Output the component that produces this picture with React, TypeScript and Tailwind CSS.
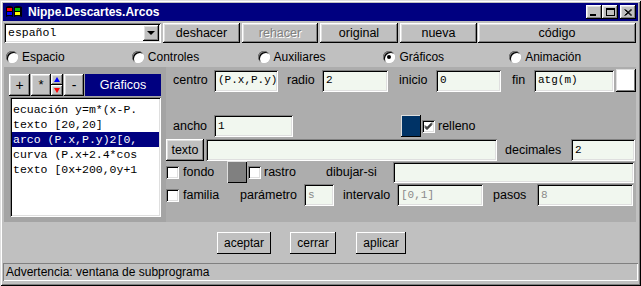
import React from "react";

const SANS = '"Liberation Sans", Arial, sans-serif';
const MONO = '"Liberation Mono", "Courier New", monospace';

const raised =
  "bg-[#c0c0c0] shadow-[inset_-1px_-1px_0_#000,inset_1px_1px_0_#fff,inset_-2px_-2px_0_#808080,inset_2px_2px_0_#dfdfdf]";
const raisedThin = "bg-[#c0c0c0] shadow-[inset_-1px_-1px_0_#000,inset_1px_1px_0_#fff]";
const field =
  "bg-[#f1f7ef] shadow-[inset_1px_1px_0_#808080,inset_-1px_-1px_0_#fff,inset_2px_2px_0_#000,inset_-2px_-2px_0_#dfdfdf]";
const whiteSunken =
  "bg-white shadow-[inset_1px_1px_0_#808080,inset_-1px_-1px_0_#fff,inset_2px_2px_0_#000,inset_-2px_-2px_0_#dfdfdf]";

function Field({ w, text, dim, h = "h-[22px]" }: { w: string; text?: string; dim?: boolean; h?: string }) {
  return (
    <div
      className={`${field} ${w} ${h} shrink-0 flex items-center pl-[4px] text-[11px] ${dim ? "text-[#8a8a8a]" : "text-black"}`}
      style={{ fontFamily: MONO }}
    >
      {text}
    </div>
  );
}

function Label({ w, pl, children }: { w: string; pl: string; children: React.ReactNode }) {
  return <div className={`${w} ${pl} shrink-0 text-[12.5px] text-black whitespace-nowrap`}>{children}</div>;
}

function Check({ checked }: { checked?: boolean }) {
  return (
    <div className={`${whiteSunken} w-[13px] h-[13px] shrink-0 relative`}>
      {checked && (
        <svg className="absolute left-0 top-0" width="13" height="13" viewBox="0 0 13 13">
          <path d="M3 5.5 L5 7.5 L10 2.5 M3 6.5 L5 8.5 L10 3.5 M3 7.5 L5 9.5 L10 4.5" stroke="#000" strokeWidth="1" fill="none" />
        </svg>
      )}
    </div>
  );
}

function Radio({ checked, label }: { checked?: boolean; label: string }) {
  return (
    <div className="flex items-center pl-[2px]">
      <div className="w-[12px] h-[12px] rounded-full bg-white shadow-[inset_1px_1px_0_#808080,inset_-1px_-1px_0_#fff,inset_2px_2px_0_#000] flex items-center justify-center shrink-0">
        {checked && <div className="w-[4px] h-[4px] rounded-full bg-black" />}
      </div>
      <span className="ml-[4px] text-[12px] text-black">{label}</span>
    </div>
  );
}

function Btn({ w, children, disabled }: { w: string; children: React.ReactNode; disabled?: boolean }) {
  return (
    <div
      className={`${raised} ${w} h-[20px] shrink-0 flex items-center justify-center text-[12.5px] ${
        disabled ? "text-[#808080] [text-shadow:1px_1px_0_#fff]" : "text-black"
      }`}
    >
      {children}
    </div>
  );
}

function WinIcon() {
  return (
    <svg width="18" height="14" viewBox="0 0 18 14">
      <path d="M1 2 Q4 0 8 2 L8 12 Q4 10 1 12 Z" fill="#000" />
      <path d="M9 2 Q13 0 17 2 L17 12 Q13 10 9 12 Z" fill="#000" />
      <rect x="2" y="3" width="5" height="3" fill="#ff0000" />
      <rect x="10" y="3" width="5" height="3" fill="#00c000" />
      <rect x="2" y="7" width="5" height="3" fill="#0000ff" />
      <rect x="10" y="7" width="5" height="3" fill="#ffff00" />
    </svg>
  );
}

function CtlBtn({ children, ml }: { children: React.ReactNode; ml?: string }) {
  return (
    <div className={`${raised} w-[16px] h-[14px] flex items-center justify-center ${ml ?? ""}`}>{children}</div>
  );
}

export default function App() {
  const items = [
    "ecuación y=m*(x-P.",
    "texto [20,20]",
    "arco (P.x,P.y)2[0,",
    "curva (P.x+2.4*cos",
    "texto [0x+200,0y+1",
  ];
  return (
    <div
      className="w-[641px] h-[286px] bg-[#c0c0c0] p-[3px] flex flex-col shadow-[inset_1px_1px_0_#dfdfdf,inset_-1px_-1px_0_#000,inset_2px_2px_0_#fff,inset_-2px_-2px_0_#808080] overflow-hidden"
      style={{ fontFamily: SANS }}
    >
      {/* title bar */}
      <div className="h-[18px] bg-[#000080] flex items-center pl-[2px] pr-[2px] shrink-0">
        <WinIcon />
        <span className="ml-[5px] text-white font-bold text-[12px]">Nippe.Descartes.Arcos</span>
        <div className="ml-auto flex items-center">
          <CtlBtn>
            <div className="w-[6px] h-[2px] bg-black mt-[6px] mr-[2px]" />
          </CtlBtn>
          <CtlBtn>
            <div className="w-[9px] h-[8px] border border-black border-t-2" />
          </CtlBtn>
          <CtlBtn ml="ml-[2px]">
            <svg width="8" height="7" viewBox="0 0 8 7">
              <path d="M0.5 0.5 L7 6.5 M1.5 0.5 L8 6.5 M7 0.5 L0.5 6.5 M8 0.5 L1.5 6.5" stroke="#000" strokeWidth="1" />
            </svg>
          </CtlBtn>
        </div>
      </div>

      {/* top toolbar */}
      <div className="mt-[2px] h-[20px] flex pl-[1px] shrink-0">
        <div className={`${whiteSunken} w-[157px] h-[20px] flex items-center relative shrink-0`}>
          <span className="pl-[4px] text-[11.5px] text-black" style={{ fontFamily: MONO }}>
            español
          </span>
          <div className={`${raised} absolute right-[2px] top-[2px] w-[16px] h-[16px] flex items-center justify-center`}>
            <div className="w-0 h-0 border-l-[4px] border-r-[4px] border-t-[4px] border-l-transparent border-r-transparent border-t-black" />
          </div>
        </div>
        <div className="ml-[2px] flex gap-[2px]">
          <Btn w="w-[77px]">deshacer</Btn>
          <Btn w="w-[76px]" disabled>
            rehacer
          </Btn>
          <Btn w="w-[78px]">original</Btn>
          <Btn w="w-[77px]">nueva</Btn>
        </div>
        <div className="ml-[1px]">
          <Btn w="w-[158px]">código</Btn>
        </div>
      </div>

      {/* radios */}
      <div className="h-[24px] grid grid-cols-5 w-[629px] ml-[1px] items-center pt-[3px] shrink-0">
        <Radio label="Espacio" />
        <Radio label="Controles" />
        <Radio label="Auxiliares" />
        <Radio checked label="Gráficos" />
        <Radio label="Animación" />
      </div>

      {/* main area */}
      <div className="h-[155px] w-[632px] ml-[1px] flex shrink-0">
        {/* left panel */}
        <div className="w-[162px] bg-[#a4a4a4] pt-[7px] shrink-0">
          <div className="flex h-[22px] pl-[5px]">
            <div className={`${raised} w-[21px] h-[22px] flex items-center justify-center text-[14px] text-black`}>+</div>
            <div className={`${raised} ml-[1px] w-[20px] h-[22px] flex items-center justify-center text-[13px] text-black`}>*</div>
            <div className="w-[12px] h-[22px] flex flex-col">
              <div className={`${raised} h-[11px] flex items-center justify-center`}>
                <div className="w-0 h-0 border-l-[3px] border-r-[3px] border-b-[5px] border-l-transparent border-r-transparent border-b-[#0000ff]" />
              </div>
              <div className={`${raised} h-[11px] flex items-center justify-center`}>
                <div className="w-0 h-0 border-l-[3px] border-r-[3px] border-t-[5px] border-l-transparent border-r-transparent border-t-[#ff0000]" />
              </div>
            </div>
            <div className={`${raised} ml-[1px] w-[20px] h-[22px] flex items-center justify-center text-[14px] text-black`}>-</div>
            <div className="ml-[1px] w-[76px] h-[22px] bg-[#000080] text-white text-[12.5px] flex items-center justify-center">
              Gráficos
            </div>
          </div>
          <div className={`${whiteSunken} ml-[6px] mt-[1px] w-[151px] h-[120px] pt-[5px] pl-[2px] pr-[2px]`}>
            {items.map((t, i) => (
              <div
                key={i}
                className={`h-[15px] flex items-center pl-[1px] text-[11.5px] whitespace-nowrap overflow-hidden ${
                  i === 2 ? "bg-[#000080] text-white" : "text-black"
                }`}
                style={{ fontFamily: MONO }}
              >
                {t}
              </div>
            ))}
          </div>
        </div>

        {/* right panel */}
        <div className="w-[470px] bg-[#adadad] flex flex-col">
          {/* row 1 */}
          <div className="mt-[2px] h-[23px] flex items-center">
            <Label w="w-[48px]" pl="pl-[7px]">centro</Label>
            <Field w="w-[64px]" text="(P.x,P.y)" />
            <Label w="w-[44px]" pl="pl-[9px]">radio</Label>
            <Field w="w-[66px]" text="2" />
            <Label w="w-[48px]" pl="pl-[11px]">inicio</Label>
            <Field w="w-[65px]" text="0" />
            <Label w="w-[33px]" pl="pl-[11px]">fin</Label>
            <Field w="w-[80px]" text="atg(m)" />
            <div className="ml-[2px] w-[20px] h-[23px] bg-white shadow-[inset_-1px_-1px_0_#000,inset_1px_1px_0_#dfdfdf,inset_-2px_-2px_0_#808080]" />
          </div>
          {/* row 2 */}
          <div className="mt-[23px] h-[22px] flex items-center">
            <Label w="w-[48px]" pl="pl-[7px]">ancho</Label>
            <Field w="w-[79px]" text="1" />
            <div className="w-[108px] shrink-0" />
            <div className="w-[20px] h-[22px] bg-[#003366] shadow-[inset_-1px_-1px_0_#000,inset_1px_1px_0_#dfdfdf] shrink-0" />
            <div className="ml-[1px]">
              <Check checked />
            </div>
            <span className="ml-[3px] text-[12.5px] text-black">relleno</span>
          </div>
          {/* row 3 */}
          <div className="mt-[2px] h-[22px] flex items-center">
            <div className={`${raised} w-[38px] h-[22px] flex items-center justify-center text-[12.5px] text-black shrink-0`}>
              texto
            </div>
            <div className="ml-[2px]">
              <Field w="w-[291px]" />
            </div>
            <Label w="w-[74px]" pl="pl-[8px]">decimales</Label>
            <Field w="w-[64px]" text="2" />
          </div>
          {/* row 4 */}
          <div className="h-[22px] flex items-center">
            <Check />
            <Label w="w-[48px]" pl="pl-[4px]">fondo</Label>
            <div className="w-[20px] h-[22px] bg-[#808080] shadow-[inset_1px_1px_0_#dfdfdf,inset_-1px_-1px_0_#000] shrink-0" />
            <div className="ml-[1px]">
              <Check />
            </div>
            <Label w="w-[65px]" pl="pl-[3px]">rastro</Label>
            <Label w="w-[67px]" pl="pl-0">dibujar-si</Label>
            <Field w="w-[241px]" h="h-[21px]" />
          </div>
          {/* row 5 */}
          <div className="mt-[1px] h-[22px] flex items-center">
            <Check />
            <Label w="w-[61px]" pl="pl-[4px]">familia</Label>
            <Label w="w-[64px]" pl="pl-0">parámetro</Label>
            <Field w="w-[30px]" text="s" dim />
            <Label w="w-[63px]" pl="pl-[9px]">intervalo</Label>
            <Field w="w-[86px]" text="[0,1]" dim />
            <Label w="w-[54px]" pl="pl-[10px]">pasos</Label>
            <Field w="w-[96px]" text="8" dim />
          </div>
        </div>
      </div>

      {/* bottom buttons */}
      <div className="h-[41px] pt-[10px] flex shrink-0 pl-[214px]">
        <div className={`${raisedThin} w-[54px] h-[22px] flex items-center justify-center text-[12px] text-black`}>aceptar</div>
        <div className={`${raisedThin} ml-[19px] w-[46px] h-[22px] flex items-center justify-center text-[12px] text-black`}>cerrar</div>
        <div className={`${raisedThin} ml-[20px] w-[50px] h-[22px] flex items-center justify-center text-[12px] text-black`}>aplicar</div>
      </div>

      {/* status bar */}
      <div className="h-[18px] w-[635px] flex items-center pl-[3px] shadow-[inset_1px_1px_0_#808080,inset_-1px_-1px_0_#fff] text-[12px] text-black shrink-0">
        Advertencia: ventana de subprograma
      </div>
    </div>
  );
}
